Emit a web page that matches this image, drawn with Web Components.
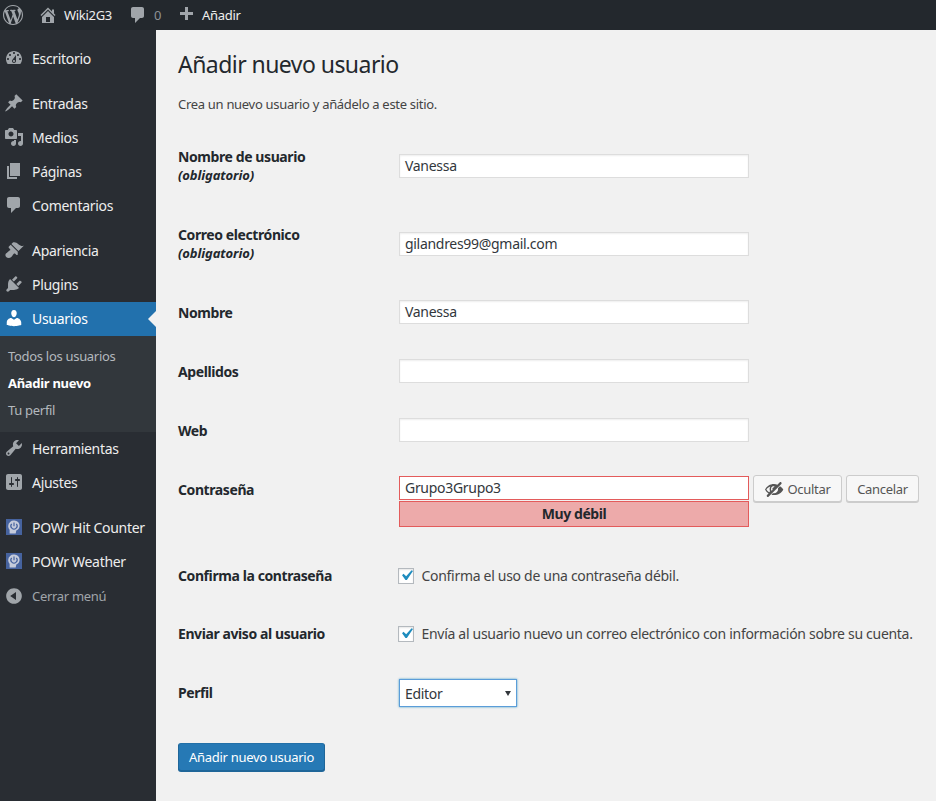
<!DOCTYPE html>
<html lang="es">
<head>
<meta charset="utf-8">
<title>Añadir nuevo usuario</title>
<style>
    html, body { margin: 0; padding: 0; height: 100%; overflow: hidden; background: #f1f1f1; }
    body { font-family: "Noto Sans", "Open Sans", sans-serif; font-size: 14px; color: #444; letter-spacing: -.3px; }
</style>
</head>
<body>
<wp-admin></wp-admin>

<script>
const ICONS = {
    wp: 'M20 10c0-5.51-4.49-10-10-10C4.48 0 0 4.49 0 10c0 5.52 4.48 10 10 10 5.51 0 10-4.48 10-10zM7.78 15.37L4.37 6.22c.55-.02 1.17-.08 1.17-.08.5-.06.44-1.13-.06-1.11 0 0-1.45.11-2.37.11-.18 0-.37 0-.58-.01C4.12 2.69 6.87 1.11 10 1.11c2.33 0 4.45.87 6.05 2.34-.68-.11-1.65.39-1.65 1.58 0 .74.45 1.36.9 2.1.35.61.55 1.36.55 2.46 0 1.49-1.4 5-1.4 5l-3.03-8.37c.54-.02.82-.17.82-.17.5-.05.44-1.25-.06-1.22 0 0-1.44.12-2.38.12-.87 0-2.33-.12-2.33-.12-.5-.03-.56 1.2-.06 1.22l.92.08 1.26 3.41zM17.41 10c.24-.64.74-1.87.43-4.25.7 1.29 1.05 2.71 1.05 4.25 0 3.29-1.73 6.24-4.4 7.78.97-2.59 1.94-5.2 2.92-7.78zM6.1 18.09C3.12 16.65 1.11 13.53 1.11 10c0-1.3.23-2.48.72-3.59C3.25 10.3 4.67 14.2 6.1 18.09zm4.03-6.63l2.58 6.98c-.86.29-1.76.45-2.71.45-.79 0-1.57-.11-2.29-.33.81-2.38 1.62-4.74 2.42-7.1z',
    home: 'M16 8.5l1.53 1.53-1.06 1.06L10 4.62l-6.47 6.47-1.06-1.06L10 2.5l4 4v-2h2v4zm-6-2.46l6 5.99V18H4v-5.97zM12 17v-5H8v5h4z',
    comments: 'M5 2h9c1.1 0 2 .9 2 2v7c0 1.1-.9 2-2 2h-2l-5 5v-5H5c-1.1 0-2-.9-2-2V4c0-1.1.9-2 2-2z',
    plus: 'M17 7v3h-5v5H9v-5H4V7h5V2h3v5h5z',
    dashboard: 'M3.76 16h12.48c1.1-1.37 1.76-3.11 1.76-5 0-4.42-3.58-8-8-8s-8 3.58-8 8c0 1.89.66 3.63 1.76 5zM10 4c.55 0 1 .45 1 1s-.45 1-1 1-1-.45-1-1 .45-1 1-1zM6 6c.55 0 1 .45 1 1s-.45 1-1 1-1-.45-1-1 .45-1 1-1zm8 0c.55 0 1 .45 1 1s-.45 1-1 1-1-.45-1-1 .45-1 1-1zm-5.37 5.55L12 7v6c0 1.1-.9 2-2 2s-2-.9-2-2c0-.57.24-1.08.63-1.45zM4 10c.55 0 1 .45 1 1s-.45 1-1 1-1-.45-1-1 .45-1 1-1zm12 0c.55 0 1 .45 1 1s-.45 1-1 1-1-.45-1-1 .45-1 1-1zm-5 3c0-.55-.45-1-1-1s-1 .45-1 1 .45 1 1 1 1-.45 1-1z',
    post: 'M10.44 3.02l1.82-1.82 6.36 6.35-1.83 1.82c-1.05-.68-2.48-.57-3.41.36l-.75.75c-.92.93-1.04 2.35-.35 3.41l-1.83 1.82-2.41-2.41-2.8 2.79c-.42.42-3.38 2.71-3.8 2.29s1.86-3.39 2.28-3.81l2.79-2.79L4.1 9.36l1.83-1.82c1.05.69 2.48.57 3.4-.36l.75-.75c.93-.92 1.05-2.35.36-3.41z',
    media: 'M13 11V4c0-.55-.45-1-1-1h-1.67L9 1H5L3.67 3H2c-.55 0-1 .45-1 1v7c0 .55.45 1 1 1h10c.55 0 1-.45 1-1zM7 4.5c1.38 0 2.5 1.12 2.5 2.5S8.38 9.5 7 9.5 4.5 8.38 4.5 7 5.62 4.5 7 4.5zM14 6h5v10.5c0 1.38-1.12 2.5-2.5 2.5S14 17.88 14 16.5s1.12-2.5 2.5-2.5c.17 0 .34.02.5.05V9h-3V6zm-4 8.05V13h2v3.5c0 1.38-1.12 2.5-2.5 2.5S7 17.88 7 16.5 8.12 14 9.5 14c.17 0 .34.02.5.05z',
    page: 'M6 15V2h10v13H6zm-1 1h8v2H3V5h2v11z',
    appearance: 'M14.48 11.06L7.41 3.99l1.5-1.5c.5-.56 2.3-.47 3.51.32 1.21.8 1.43 1.28 2.91 2.1 1.18.64 2.45 1.26 4.45.85zm-.71.71L6.7 4.7 4.93 6.47c-.39.39-.39 1.02 0 1.41l1.06 1.06c.39.39.39 1.03 0 1.42-.6.6-1.43 1.11-2.21 1.69-.35.26-.7.53-1.01.84C1.43 13.23.77 15.5 2.17 17s3.73 1.4 5.12-.01c.31-.31.59-.66.84-1.01.58-.78 1.09-1.61 1.69-2.21.39-.39 1.03-.39 1.42 0l1.06 1.06c.39.39 1.02.39 1.41 0z',
    plugins: 'M13.11 4.36L9.87 7.6 8 5.73l3.24-3.24c.35-.34 1.05-.2 1.56.32.52.51.66 1.21.31 1.55zm-8 1.77l.91-1.12 9.01 9.01-1.19.84c-.71.71-2.63 1.16-3.82 1.16H6.14L4.9 17.26c-.59.59-1.54.59-2.12 0-.59-.58-.59-1.53 0-2.12l1.24-1.24v-3.88c0-1.13.4-3.19 1.09-3.89zm7.26 3.97l3.24-3.24c.34-.35 1.04-.21 1.55.31.52.51.66 1.21.31 1.55l-3.24 3.25z',
    users: 'M10 9.25c-2.27 0-2.73-3.44-2.73-3.44C7 4.02 7.82 2 9.97 2c2.16 0 2.98 2.02 2.71 3.81 0 0-.41 3.44-2.68 3.44zm0 2.57L12.72 10c2.39 0 4.52 2.33 4.52 4.53v2.49s-3.65 1.13-7.24 1.13c-3.65 0-7.24-1.13-7.24-1.13v-2.49c0-2.25 1.94-4.48 4.47-4.48z',
    tools: 'M16.68 9.77c-1.34 1.34-3.3 1.67-4.95.99l-5.41 6.52c-.99.99-2.59.99-3.58 0s-.99-2.59 0-3.57l6.52-5.42c-.68-1.65-.35-3.61.99-4.95 1.28-1.28 3.12-1.62 4.72-1.06l-2.89 2.89 2.82 2.82 2.86-2.87c.53 1.58.18 3.39-1.08 4.65zM3.81 16.21c.4.39 1.04.39 1.43 0 .4-.4.4-1.04 0-1.43-.39-.4-1.03-.4-1.43 0-.39.39-.39 1.03 0 1.43z',
    settings: 'M18 16V4c0-1.1-.9-2-2-2H4c-1.1 0-2 .9-2 2v12c0 1.1.9 2 2 2h12c1.1 0 2-.9 2-2zM8 11h1c.55 0 1 .45 1 1s-.45 1-1 1H8v1.5c0 .28-.22.5-.5.5s-.5-.22-.5-.5V13H6c-.55 0-1-.45-1-1s.45-1 1-1h1V5.5c0-.28.22-.5.5-.5s.5.22.5.5V11zm5-2h-1c-.55 0-1-.45-1-1s.45-1 1-1h1V5.5c0-.28.22-.5.5-.5s.5.22.5.5V7h1c.55 0 1 .45 1 1s-.45 1-1 1h-1v5.5c0 .28-.22.5-.5.5s-.5-.22-.5-.5V9z',
    collapse: 'M10 2.16c4.33 0 7.84 3.51 7.84 7.84s-3.51 7.84-7.84 7.84S2.16 14.33 2.16 10 5.71 2.16 10 2.16zm2 11.72V6.12L6.18 9.97z',
    hidden: 'M17.2 3.3l.16.17c.39.39.39 1.02 0 1.41L4.55 17.7c-.39.39-1.03.39-1.41 0l-.17-.17c-.39-.39-.39-1.02 0-1.41l1.59-1.6c-1.57-1-2.76-2.3-3.56-3.93.81-1.65 2.03-2.98 3.64-3.99S8.04 5.09 10 5.09c1.2 0 2.33.21 3.4.6l2.38-2.39c.39-.39 1.03-.39 1.42 0zM8.8 7.3A3 3 0 0 0 6.96 10c0 .7.24 1.35.64 1.86l1.1-1.1A1.6 1.6 0 0 1 8.4 10c0-.7.45-1.3 1.08-1.5l1.2-1.2a3 3 0 0 0-1.88 0zM2.4 10.5c.6 1.1 1.5 2.03 2.7 2.77l1-1A4.4 4.4 0 0 1 5.6 10c0-.9.27-1.74.73-2.44C4.66 8.2 3.3 9.2 2.4 10.5zM16 7.2c1.5.9 2.6 2 3.3 3.3-.8 1.65-2 2.98-3.6 3.99S12 16 10 16c-.9 0-1.8-.12-2.6-.36l1.5-1.5c.36.1.73.14 1.1.14 2.3 0 4.1-1.8 4.1-4 0-.4-.06-.78-.16-1.14z'
};
const svg = (name, size) => `<svg viewBox="0 0 20 20" width="${size}" height="${size}" fill="currentColor" aria-hidden="true"><path d="${ICONS[name]}"/></svg>`;

class WpBarItem extends HTMLElement {
    constructor() {
        super();
        this.attachShadow({mode: 'open'});
        this.shadowRoot.innerHTML = `
            <style>
                :host{display:flex;align-items:center;height:30px;gap:var(--gap,6px);color:#eee;font-size:13px;box-sizing:border-box;}
                svg{color:#a0a5aa;display:block;flex:none;}
            </style>
            ${svg(this.getAttribute('icon'), 20)}
            <slot></slot>`;
    }
}
customElements.define('wp-bar-item', WpBarItem);

class WpAdminBar extends HTMLElement {
    constructor() {
        super();
        this.attachShadow({mode: 'open'});
        this.shadowRoot.innerHTML = `
            <style>
                :host{display:flex;align-items:center;height:30px;background:#23282d;padding-left:3px;box-sizing:border-box;}
                .logo{--gap:0;width:35px;}
                .home{width:90px;}
                .comments{width:48px;}
                .zero{color:#8d9195;}
                .add{--gap:6px;}
            </style>
            <wp-bar-item class="logo" icon="wp"></wp-bar-item>
            <wp-bar-item class="home" icon="home">Wiki2G3</wp-bar-item>
            <wp-bar-item class="comments" icon="comments"><span class="zero">0</span></wp-bar-item>
            <wp-bar-item class="add" icon="plus">Añadir</wp-bar-item>`;
    }
}
customElements.define('wp-admin-bar', WpAdminBar);

class WpMenuItem extends HTMLElement {
    constructor() {
        super();
        this.attachShadow({mode: 'open'});
        const powr = this.hasAttribute('powr');
        const icon = powr
            ? `<svg viewBox="0 0 16 16" width="16" height="16" aria-hidden="true"><rect width="16" height="16" fill="#46639f"/><path d="M8.4 1.6a5.2 5.2 0 0 1 5.2 5.2c0 2.3-1.3 4-3.3 4.6l-.6 3H3.6v-3.7C2.7 9.800 2.2 8.400 2.200 7A5.500 5.500 0 0 1 8.400 1.600z" fill="#c5cbdb"/><path d="M8 3.600v3.600M5.700 4.800a3.100 3.100 0 1 0 4.600 0" fill="none" stroke="#46639f" stroke-width="1.200"/></svg>`
            : svg(this.getAttribute('icon'), 20);
        this.shadowRoot.innerHTML = `
            <style>
                :host{display:flex;align-items:center;height:34px;padding-bottom:2px;box-sizing:border-box;color:#eee;font-size:14px;position:relative;}
                :host([current]){background:#2271ad;color:#fff;}
                :host([current]) svg{color:#fff;}
                :host([dim]){color:#a0a5aa;font-size:13px;padding-bottom:0;}
                .ic{width:32px;flex:none;display:flex;justify-content:center;padding-right:4px;box-sizing:border-box;}
                svg{color:#a0a5aa;display:block;}
                .arrow{display:none;position:absolute;right:0;top:50%;margin-top:-8px;border:8px solid transparent;border-right-color:#f1f1f1;border-left:0;}
                :host([current]) .arrow{display:block;}
            </style>
            <div class="ic">${icon}</div>
            <slot></slot>
            <i class="arrow"></i>`;
    }
}
customElements.define('wp-menu-item', WpMenuItem);

class WpSubmenu extends HTMLElement {
    constructor() {
        super();
        this.attachShadow({mode: 'open'});
        this.shadowRoot.innerHTML = `
            <style>
                :host{display:block;background:#32373c;height:96px;box-sizing:border-box;padding-top:7px;font-size:13px;color:#b4b9be;}
                ::slotted(div){height:27px;line-height:27px;padding-left:8px;}
                ::slotted(.on){color:#fff;font-weight:700;}
            </style>
            <slot></slot>`;
    }
}
customElements.define('wp-submenu', WpSubmenu);

class WpSidebar extends HTMLElement {
    constructor() {
        super();
        this.attachShadow({mode: 'open'});
        this.shadowRoot.innerHTML = `
            <style>
                :host{display:block;width:156px;flex:none;background:#292d33;padding-top:12px;box-sizing:border-box;}
                .sep{height:11px;}
            </style>
            <wp-menu-item icon="dashboard">Escritorio</wp-menu-item>
            <div class="sep"></div>
            <wp-menu-item icon="post">Entradas</wp-menu-item>
            <wp-menu-item icon="media">Medios</wp-menu-item>
            <wp-menu-item icon="page">Páginas</wp-menu-item>
            <wp-menu-item icon="comments">Comentarios</wp-menu-item>
            <div class="sep"></div>
            <wp-menu-item icon="appearance">Apariencia</wp-menu-item>
            <wp-menu-item icon="plugins">Plugins</wp-menu-item>
            <wp-menu-item icon="users" current>Usuarios</wp-menu-item>
            <wp-submenu>
                <div>Todos los usuarios</div>
                <div class="on">Añadir nuevo</div>
                <div>Tu perfil</div>
            </wp-submenu>
            <wp-menu-item icon="tools">Herramientas</wp-menu-item>
            <wp-menu-item icon="settings">Ajustes</wp-menu-item>
            <div class="sep"></div>
            <wp-menu-item powr>POWr Hit Counter</wp-menu-item>
            <wp-menu-item powr>POWr Weather</wp-menu-item>
            <wp-menu-item icon="collapse" dim>Cerrar menú</wp-menu-item>`;
    }
}
customElements.define('wp-sidebar', WpSidebar);

// the row height comes from the h attribute, the table of the original has uneven rows
class WpRow extends HTMLElement {
    constructor() {
        super();
        this.attachShadow({mode: 'open'});
        this.shadowRoot.innerHTML = `
            <style>
                :host{display:grid;grid-template-columns:221px 1fr;padding-top:15px;box-sizing:border-box;}
                .label{display:flex;align-items:center;height:var(--lh,25px);font-weight:700;color:#23282d;font-size:14px;line-height:19px;letter-spacing:-.41px;}
            </style>
            <div class="label"><slot name="label"></slot></div>
            <div><slot></slot></div>`;
        this.style.height = this.getAttribute('h') + 'px';
    }
}
customElements.define('wp-row', WpRow);

class WpField extends HTMLElement {
    constructor() {
        super();
        this.attachShadow({mode: 'open'});
        this.shadowRoot.innerHTML = `
            <style>
                :host{display:block;width:350px;height:24px;box-sizing:border-box;background:#fff;border:1px solid #ddd;
                    box-shadow:inset 0 1px 2px rgba(0,0,0,.07);padding:0 5px;line-height:22px;font-size:14px;color:#32373c;}
                :host([weak]){border-color:#e35b5b;box-shadow:none;}
            </style>
            <slot></slot>`;
    }
}
customElements.define('wp-field', WpField);

class WpSelect extends HTMLElement {
    constructor() {
        super();
        this.attachShadow({mode: 'open'});
        this.shadowRoot.innerHTML = `
            <style>
                :host{display:flex;align-items:center;justify-content:space-between;width:118px;height:28px;box-sizing:border-box;background:#fff;
                    border:1px solid #5b9dd9;box-shadow:0 0 2px rgba(30,140,190,.8);padding:0 5px 0 5px;font-size:14px;color:#32373c;}
                i{border:3px solid transparent;border-top:5px solid #32373c;border-bottom:0;margin-top:1px;}
            </style>
            <slot></slot><i></i>`;
    }
}
customElements.define('wp-select', WpSelect);

class WpButton extends HTMLElement {
    constructor() {
        super();
        this.attachShadow({mode: 'open'});
        const icon = this.getAttribute('icon');
        this.shadowRoot.innerHTML = `
            <style>
                :host{display:inline-flex;align-items:center;justify-content:center;gap:3px;height:27px;box-sizing:border-box;background:#f7f7f7;
                    border:1px solid #ccc;border-radius:3px;box-shadow:0 1px 0 #ccc;color:#555;font-size:13px;}
                :host([primary]){background:#2679b5;border-color:#2270a8 #1f6699 #1f6699;box-shadow:0 1px 0 #1f6699;color:#fff;height:28px;}
                svg{display:block;}
            </style>
            ${icon ? svg(icon, 20) : ''}<slot></slot>`;
    }
}
customElements.define('wp-button', WpButton);

class WpCheck extends HTMLElement {
    constructor() {
        super();
        this.attachShadow({mode: 'open'});
        this.shadowRoot.innerHTML = `
            <style>
                :host{display:flex;align-items:center;gap:8px;height:19px;font-size:14px;color:#444;white-space:nowrap;}
                .box{width:16px;height:16px;box-sizing:border-box;background:#fff;border:1px solid #b4b9be;flex:none;
                    box-shadow:inset 0 1px 2px rgba(0,0,0,.1);margin-left:-1px;}
                svg{display:block;margin:-4px 0 0 -3px;}
                span{margin-left:-.5px;}
            </style>
            <div class="box"><svg viewBox="0 0 20 20" width="21" height="21"><path d="M14.83 4.89l1.34.94-5.81 8.38H9.02L5.78 9.67l1.34-1.25 2.57 2.4z" fill="#1e8cbe"/></svg></div>
            <span><slot></slot></span>`;
    }
}
customElements.define('wp-check', WpCheck);

class WpUserForm extends HTMLElement {
    constructor() {
        super();
        this.attachShadow({mode: 'open'});
        this.shadowRoot.innerHTML = `
            <style>
                :host{display:block;flex:1;padding-left:22px;box-sizing:border-box;color:#444;min-width:0;}
                h1{margin:0;padding-top:20px;height:50px;box-sizing:border-box;font-size:23px;line-height:29px;font-weight:400;color:#23282d;letter-spacing:-.55px;}
                p{margin:0;padding-top:15px;font-size:13px;line-height:18px;height:59px;box-sizing:border-box;color:#444;}
                em{display:block;font-size:13px;letter-spacing:-.1px;}
                .pw{display:flex;gap:4px;align-items:flex-start;margin-top:-1px;}
                .pw wp-field{margin-top:1px;flex:none;}
                .acts{display:flex;gap:4px;}
                .ocultar{width:89px;}
                .cancelar{width:73px;}
                .meter{width:350px;height:26px;box-sizing:border-box;margin-top:-1px;background:#edaaaa;border:1px solid #e35b5b;
                    text-align:center;font-weight:700;font-size:14px;line-height:24px;color:#23282d;letter-spacing:-.41px;}
                .submit{width:147px;}
                .two{--lh:24px;}
                .check{--lh:19px;}
                .perfil{--lh:26px;}
            </style>
            <h1>Añadir nuevo usuario</h1>
            <p>Crea un nuevo usuario y añádelo a este sitio.</p>
            <wp-row class="two" h="78"><span slot="label">Nombre de usuario<em>(obligatorio)</em></span><wp-field>Vanessa</wp-field></wp-row>
            <wp-row class="two" h="68"><span slot="label">Correo electrónico<em>(obligatorio)</em></span><wp-field>gilandres99@gmail.com</wp-field></wp-row>
            <wp-row h="59"><span slot="label">Nombre</span><wp-field>Vanessa</wp-field></wp-row>
            <wp-row h="59"><span slot="label">Apellidos</span><wp-field></wp-field></wp-row>
            <wp-row h="58"><span slot="label">Web</span><wp-field></wp-field></wp-row>
            <wp-row h="90" style="--lh:27px"><span slot="label">Contraseña</span>
                <div class="pw"><wp-field weak>Grupo3Grupo3</wp-field>
                    <div class="acts"><wp-button class="ocultar" icon="hidden">Ocultar</wp-button><wp-button class="cancelar">Cancelar</wp-button></div></div>
                <div class="meter">Muy débil</div>
            </wp-row>
            <wp-row class="check" h="58"><span slot="label">Confirma la contraseña</span><wp-check>Confirma el uso de una contraseña débil.</wp-check></wp-row>
            <wp-row class="check" h="55"><span slot="label">Enviar aviso al usuario</span><wp-check>Envía al usuario nuevo un correo electrónico con información sobre su cuenta.</wp-check></wp-row>
            <wp-row class="perfil" h="79"><span slot="label">Perfil</span><wp-select>Editor</wp-select></wp-row>
            <wp-button class="submit" primary>Añadir nuevo usuario</wp-button>`;
    }
}
customElements.define('wp-user-form', WpUserForm);

class WpAdmin extends HTMLElement {
    constructor() {
        super();
        this.attachShadow({mode: 'open'});
        this.shadowRoot.innerHTML = `
            <style>
                :host{display:flex;flex-direction:column;height:100vh;overflow:hidden;}
                .main{display:flex;flex:1;}
            </style>
            <wp-admin-bar></wp-admin-bar>
            <div class="main"><wp-sidebar></wp-sidebar><wp-user-form></wp-user-form></div>`;
    }
}
customElements.define('wp-admin', WpAdmin);
</script>
</body>
</html>
